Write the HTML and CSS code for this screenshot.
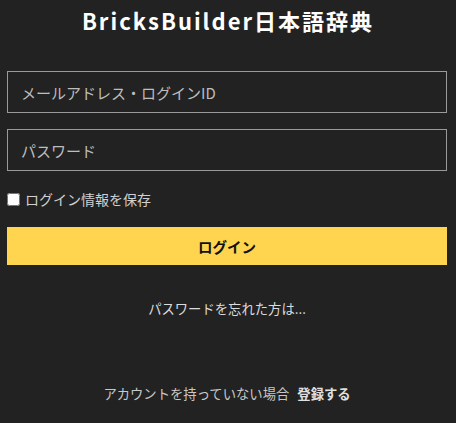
FILE: index.html
```html
<!DOCTYPE html>
<html lang="ja">
<head>
<meta charset="utf-8">
<title>ログイン - BricksBuilder日本語辞典</title>
<link rel="stylesheet" href="styles.css">
</head>
<body>
<main class="page">
  <h1 class="title">BricksBuilder日本語辞典</h1>
  <form class="login-form">
    <input class="field" type="text" placeholder="メールアドレス・ログインID">
    <input class="field" type="password" placeholder="パスワード">
    <label class="remember"><input class="remember-box" type="checkbox"><span>ログイン情報を保存</span></label>
    <button class="submit" type="button">ログイン</button>
  </form>
  <p class="forgot">パスワードを忘れた方は...</p>
  <p class="signup">アカウントを持っていない場合<a class="signup-link" href="#">登録する</a></p>
</main>
</body>
</html>
```
FILE: styles.css
```css
html, body {
  margin: 0;
  padding: 0;
  background: #222222;
}
body {
  font-family: "Noto Sans CJK JP", "Noto Sans", sans-serif;
  color: #d0d0d0;
}
.page {
  display: flex;
  flex-direction: column;
  padding: 5px 9px 0 7px;
  height: 423px;
  box-sizing: border-box;
}
.title {
  margin: 0;
  height: 30px;
  line-height: 30px;
  font-size: 22px;
  font-weight: 700;
  letter-spacing: 2px;
  color: #ffffff;
  text-align: center;
  padding-left: 2px;
}
.login-form {
  display: flex;
  flex-direction: column;
  margin-top: 36px;
}
.field {
  box-sizing: border-box;
  height: 42px;
  width: 100%;
  margin: 0 0 16px;
  padding: 0 13px;
  border: 1px solid #9a9a9a;
  border-radius: 0;
  background: #222222;
  color: #e0e0e0;
  font-family: inherit;
  font-size: 15px;
  outline: none;
}
.field::placeholder {
  color: #bdbdbd;
}
.remember {
  display: flex;
  align-items: center;
  height: 20px;
  margin-top: 2px;
  font-size: 14px;
  color: #d0d0d0;
}
.remember-box {
  width: 13px;
  height: 13px;
  margin: 0 5px 0 0;
}
.submit {
  margin-top: 18px;
  height: 38px;
  border: none;
  background: #ffd54f;
  color: #111111;
  font-family: inherit;
  font-size: 14.5px;
  font-weight: 700;
  cursor: pointer;
}
.forgot {
  margin: 34px 0 0;
  line-height: 20px;
  font-size: 13.33px;
  text-align: center;
  color: #dcdcdc;
}
.signup {
  margin: 65px 0 0;
  line-height: 20px;
  font-size: 13.33px;
  text-align: center;
  color: #c8c8c8;
}
.signup-link {
  margin-left: 8px;
  font-weight: 700;
  color: #e0e0e0;
  text-decoration: none;
}
```
